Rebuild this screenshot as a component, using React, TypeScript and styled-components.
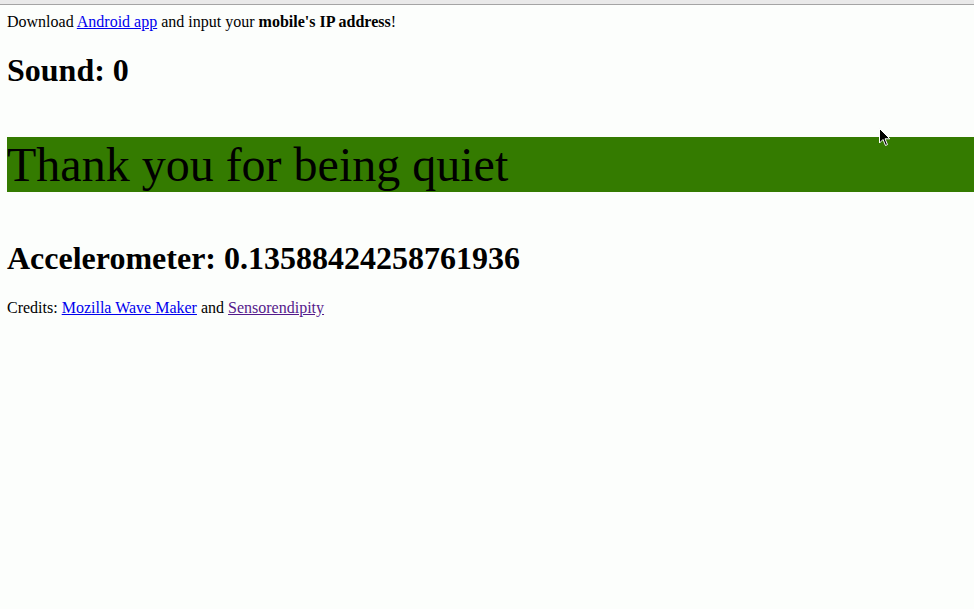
import React from "react";
import styled, { createGlobalStyle } from "styled-components";

const Global = createGlobalStyle`
  html, body {
    margin: 0;
    padding: 0;
    background: #fcfefc;
  }
  body {
    font-family: "Liberation Serif", "Times New Roman", serif;
    font-size: 16px;
    color: #000;
    overflow: hidden;
  }
`;

const Chrome = styled.div`
  height: 4px;
  background: #e9e9e9;
  border-bottom: 1px solid #a4a4a4;
`;

const Page = styled.main`
  position: relative;
  padding: 8px 0 0 7px;
  min-height: 596px;
  box-sizing: border-box;
`;

const Para = styled.p<{ $first?: boolean }>`
  margin: ${(p) => (p.$first ? "0 0 16px" : "16px 0")};
  font-size: 16px;
`;

const Heading = styled.h1`
  font-size: 32px;
  font-weight: bold;
  margin: 21.44px 0;
`;

const Banner = styled.p`
  margin: 48px 0;
  font-size: 48px;
  background: #347b00;
  color: #000;
`;

const Link = styled.a<{ $visited?: boolean }>`
  color: ${(p) => (p.$visited ? "#551a8b" : "#0000ee")};
  text-decoration: underline;
`;

const Cursor = styled.svg`
  position: absolute;
  left: 879px;
  top: 123px;
  pointer-events: none;
`;

export default function App() {
  return (
    <>
      <Global />
      <Chrome />
      <Page>
        <Para $first>
          Download <Link href="#">Android app</Link> and input your{" "}
          <b>mobile's IP address</b>!
        </Para>
        <Heading>Sound: 0</Heading>
        <Banner>Thank you for being quiet</Banner>
        <Heading>Accelerometer: 0.13588424258761936</Heading>
        <Para>
          Credits: <Link href="#">Mozilla Wave Maker</Link> and{" "}
          <Link href="#" $visited>
            Sensorendipity
          </Link>
        </Para>
        <Cursor width="12" height="19" viewBox="0 0 12 19">
          <path
            d="M0.5 0.5 L0.5 15 L4 11.5 L6.5 17.5 L8.5 16.6 L6 10.8 L10.8 10.8 Z"
            fill="#000"
            stroke="#fff"
            strokeWidth="1"
          />
        </Cursor>
      </Page>
    </>
  );
}
